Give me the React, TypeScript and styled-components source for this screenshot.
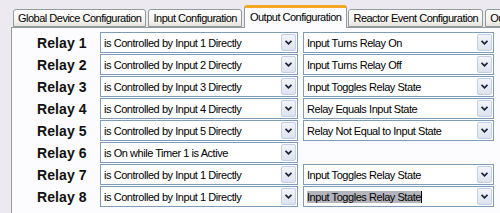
import React from 'react';
import styled, { createGlobalStyle } from 'styled-components';

const GlobalStyle = createGlobalStyle`
  html, body {
    margin: 0;
    padding: 0;
    background: #ece9f0;
  }
  body {
    font-family: 'Liberation Sans', Arial, sans-serif;
  }
`;

const Page = styled.div`
  width: 500px;
  height: 213px;
  overflow: hidden;
  background: #ece9f0;
`;

const TabStrip = styled.div`
  display: flex;
  align-items: flex-end;
  height: 27px;
  padding-left: 13px;
  white-space: nowrap;
  position: relative;
  z-index: 1;
`;

const Tab = styled.div<{ $active?: boolean }>`
  box-sizing: border-box;
  flex-shrink: 0;
  height: ${(p) => (p.$active ? '23px' : '18px')};
  margin: ${(p) => (p.$active ? '0 1px -1px 0' : '0 2px 0 0')};
  padding: ${(p) => (p.$active ? '3px 5px 0' : '2px 4px 0')};
  font-size: 11px;
  letter-spacing: -0.5px;
  color: #000;
  border: 1px solid #919b9c;
  border-bottom: ${(p) => (p.$active ? 'none' : '1px solid #919b9c')};
  border-top: ${(p) => (p.$active ? '3px solid #f5a623' : '1px solid #919b9c')};
  border-radius: 3px 3px 0 0;
  background: ${(p) =>
    p.$active ? '#fcfcfe' : 'linear-gradient(#ffffff, #f3f2ee 70%, #e6e4dc)'};
`;

const Panel = styled.div`
  margin-left: 11px;
  height: 200px;
  background: #fcfcfe;
  border-top: 1px solid #919b9c;
  border-left: 1px solid #919b9c;
  box-sizing: border-box;
  padding: 4px 0 0 25px;
`;

const Grid = styled.div`
  display: grid;
  grid-template-columns: 58px 198px 191px;
  column-gap: 5px;
  row-gap: 1px;
  grid-auto-rows: 21px;
  align-items: center;
`;

const Label = styled.div`
  font-size: 14px;
  font-weight: bold;
  color: #111;
  letter-spacing: 0.1px;
`;

const Combo = styled.div`
  box-sizing: border-box;
  height: 21px;
  display: flex;
  align-items: center;
  border: 1px solid #7f9db9;
  background: #fff;
`;

const ComboText = styled.div`
  flex: 1;
  padding-left: 3px;
  font-size: 11px;
  letter-spacing: -0.45px;
  color: #000;
  white-space: nowrap;
  overflow: hidden;
`;

const Selected = styled.span`
  background: #b4b4bc;
  border-right: 1px solid #000;
`;

const DropButton = styled.div`
  box-sizing: border-box;
  width: 15px;
  height: 17px;
  margin: 1px;
  display: flex;
  align-items: center;
  justify-content: center;
  border: 1px solid #c3cfe6;
  border-radius: 2px;
  background: linear-gradient(#f2f4f8, #dde3ee);
`;

const Chevron = () => (
  <svg width="7" height="5" viewBox="0 0 7 5">
    <path d="M0.5 0.8 L3.5 3.8 L6.5 0.8" fill="none" stroke="#1c2434" strokeWidth="1.8" />
  </svg>
);

const Select = ({ value, selected }: { value: string; selected?: boolean }) => (
  <Combo>
    <ComboText>{selected ? <Selected>{value}</Selected> : value}</ComboText>
    <DropButton>
      <Chevron />
    </DropButton>
  </Combo>
);

const rows: { source: string; mode?: string; selected?: boolean }[] = [
  { source: 'is Controlled by Input 1 Directly', mode: 'Input Turns Relay On' },
  { source: 'is Controlled by Input 2 Directly', mode: 'Input Turns Relay Off' },
  { source: 'is Controlled by Input 3 Directly', mode: 'Input Toggles Relay State' },
  { source: 'is Controlled by Input 4 Directly', mode: 'Relay Equals Input State' },
  { source: 'is Controlled by Input 5 Directly', mode: 'Relay Not Equal to Input State' },
  { source: 'is On while Timer 1 is Active' },
  { source: 'is Controlled by Input 1 Directly', mode: 'Input Toggles Relay State' },
  { source: 'is Controlled by Input 1 Directly', mode: 'Input Toggles Relay State', selected: true },
];

const tabs = [
  'Global Device Configuration',
  'Input Configuration',
  'Output Configuration',
  'Reactor Event Configuration',
  'Output Timers',
];

export default function App() {
  return (
    <Page>
      <GlobalStyle />
      <TabStrip>
        {tabs.map((t, i) => (
          <Tab key={t} $active={i === 2}>
            {t}
          </Tab>
        ))}
      </TabStrip>
      <Panel>
        <Grid>
          {rows.map((r, i) => (
            <React.Fragment key={i}>
              <Label>Relay {i + 1}</Label>
              <Select value={r.source} />
              {r.mode ? <Select value={r.mode} selected={r.selected} /> : <div />}
            </React.Fragment>
          ))}
        </Grid>
      </Panel>
    </Page>
  );
}
